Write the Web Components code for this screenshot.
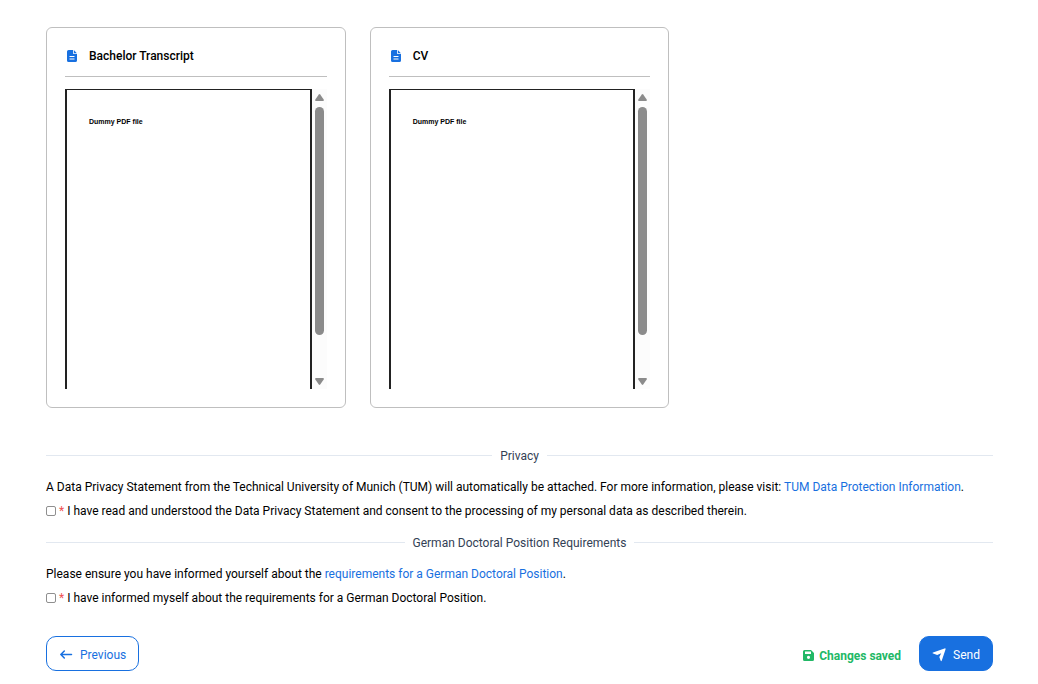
<!DOCTYPE html>
<html lang="en">
<head>
<meta charset="utf-8">
<title>Application summary</title>
<style>
  body { margin: 0; background: #fff; color: #000; font: 12px/18px Roboto, "Noto Sans", sans-serif; }
</style>
</head>
<body>
<application-summary></application-summary>
<script>
const define = (name, html) => {
  const template = document.createElement('template');
  template.innerHTML = html;
  customElements.define(name, class extends HTMLElement {
    constructor() {
      super();
      this.attachShadow({ mode: 'open' }).append(template.content.cloneNode(true));
    }
  });
};

define('pdf-preview', `
  <style>
    :host { display: flex; height: 300px; overflow: hidden; }
    .page { flex: 1; box-sizing: border-box; border: 2px solid #222; border-top-width: 1px; border-bottom: 0; padding: 27px 22px; font: bold 7px/10px "Liberation Sans", Arial, sans-serif; }
    .bar { width: 15px; box-sizing: border-box; background: #fcfcfc; display: flex; flex-direction: column; align-items: center; padding: 5px 0 4px; gap: 6px; }
    svg { display: block; fill: #8b8b8b; width: 9px; height: 7px; flex: none; }
    .track { flex: 1; width: 9px; }
    .thumb { height: 86%; border-radius: 5px; background: #8b8b8b; }
  </style>
  <div class="page"><slot></slot></div>
  <div class="bar" aria-hidden="true">
    <svg viewBox="0 0 9 7"><path d="M3.8.5Q4.5-.3 5.2.5L8.7 5.4Q9.3 7 8 7H1Q-.3 7 .3 5.4Z"/></svg>
    <div class="track"><div class="thumb"></div></div>
    <svg viewBox="0 0 9 7"><path d="M3.8 6.5Q4.5 7.3 5.2 6.5L8.7 1.6Q9.3 0 8 0H1Q-.3 0 .3 1.6Z"/></svg>
  </div>`);

define('document-card', `
  <style>
    :host { display: block; border: 1px solid #bfbfbf; border-radius: 6px; padding: 18px; }
    header { display: flex; align-items: center; gap: 12px; height: 18px; padding: 1px 2px 11px; border-bottom: 1px solid #bfbfbf; margin-bottom: 12px; }
    svg { width: 10px; height: 12px; fill: #1870e0; flex: none; }
    h3 { margin: 0; font-weight: 500; font-size: 12px; line-height: 18px; }
  </style>
  <header>
    <svg viewBox="0 0 10 12"><path fill-rule="evenodd" d="M1.6 0H6v3.2q0 .8.8.8H10v6.5Q10 12 8.4 12H1.6Q0 12 0 10.500V1.5Q0 0 1.600 0ZM2.500 6v1h5V6ZM2.500 8.500v1h5v-1Z"/><path d="M6.800.1 9.900 3.200H6.800Z"/></svg>
    <h3><slot name="title"></slot></h3>
  </header>
  <slot></slot>`);

define('section-divider', `
  <style>
    :host { display: flex; align-items: center; gap: 8px; color: #334155; }
    :host::before, :host::after { content: ""; flex: 1; border-top: 1px solid #e2e8f0; }
    h2 { margin: 0; padding-top: 2px; font: inherit; }
  </style>
  <h2><slot></slot></h2>`);

define('text-link', `
  <style>
    a { color: #1870e0; text-decoration: none; }
  </style>
  <a href="#"><slot></slot></a>`);

define('consent-check', `
  <style>
    :host { display: block; }
    label { display: flex; align-items: center; }
    input { appearance: none; box-sizing: border-box; width: 10px; height: 10px; margin: 0 3px 0 0; border: 1px solid #8f8f8f; border-radius: 2px; background: #fff; }
    input:checked { background: #1870e0; }
    .star { color: #f05252; margin-right: 3px; }
  </style>
  <label><input type="checkbox" required><span class="star">*</span><span><slot></slot></span></label>`);

define('action-button', `
  <style>
    :host { display: block; }
    button { display: flex; align-items: center; gap: 7px; height: 35px; padding: 2px 12px 0; border: 1px solid #1870e0; border-radius: 10px; background: #fff; color: #1870e0; font: inherit; cursor: pointer; }
    :host([primary]) button { background: #1870e0; color: #fff; }
  </style>
  <button type="button"><slot name="icon"></slot><slot></slot></button>`);

define('save-status', `
  <style>
    :host { display: flex; align-items: center; gap: 5px; color: #22b866; font-weight: 700; padding-top: 4px; }
    svg { width: 11px; height: 11px; fill: currentColor; }
  </style>
  <svg viewBox="0 0 11 11"><path fill-rule="evenodd" d="M1.500 0H8l3 3v6.500Q11 11 9.500 11h-8Q0 11 0 9.500v-8Q0 0 1.500 0ZM2 1.500V4h6V1.500ZM5.500 5.700a1.600 1.600 0 1 0 0 3.200 1.600 1.600 0 0 0 0-3.200Z"/></svg>
  <span role="status"><slot></slot></span>`);

define('application-summary', `
  <style>
    :host { display: block; padding: 27px 45px 13px 46px; }
    .cards { display: grid; grid-template-columns: repeat(3, 1fr); gap: 24px; margin-bottom: 37px; }
    p { margin: 0; }
    section { display: grid; gap: 6px; margin-bottom: 12px; }
    section-divider { margin-bottom: 7px; }
    footer { display: flex; justify-content: space-between; margin-top: 29px; }
    .end { display: flex; align-items: center; gap: 18px; }
    .icon { width: 14px; height: 14px; display: block; }
  </style>
  <main>
    <div class="cards">
      <document-card><span slot="title">Bachelor Transcript</span><pdf-preview>Dummy PDF file</pdf-preview></document-card>
      <document-card><span slot="title">CV</span><pdf-preview>Dummy PDF file</pdf-preview></document-card>
    </div>
    <section>
      <section-divider>Privacy</section-divider>
      <p>A Data Privacy Statement from the Technical University of Munich (TUM) will automatically be attached. For more information, please visit: <text-link>TUM Data Protection Information</text-link>.</p>
      <consent-check>I have read and understood the Data Privacy Statement and consent to the processing of my personal data as described therein.</consent-check>
    </section>
    <section>
      <section-divider>German Doctoral Position Requirements</section-divider>
      <p>Please ensure you have informed yourself about the <text-link>requirements for a German Doctoral Position</text-link>.</p>
      <consent-check>I have informed myself about the requirements for a German Doctoral Position.</consent-check>
    </section>
    <footer>
      <action-button>
        <svg slot="icon" class="icon" viewBox="0 0 14 14" fill="none" stroke="currentColor" stroke-width="1.500" stroke-linecap="round" stroke-linejoin="round"><path d="M12.500 6.500H1.800M5.300 3l-3.500 3.500 3.500 3.500"/></svg>Previous</action-button>
      <div class="end">
        <save-status>Changes saved</save-status>
        <action-button primary>
          <svg slot="icon" class="icon" viewBox="0 0 14 14" fill="currentColor"><path d="M12.500.400Q13.900 0 13.500 1.400L9.800 12.500Q9.200 13.800 8.600 12.500L7.300 8.900 9.200 5.200 5.200 6.900 1.100 5.600Q-.1 5 1.100 4.500Z"/></svg>Send</action-button>
      </div>
    </footer>
  </main>`);
</script>
</body>
</html>
